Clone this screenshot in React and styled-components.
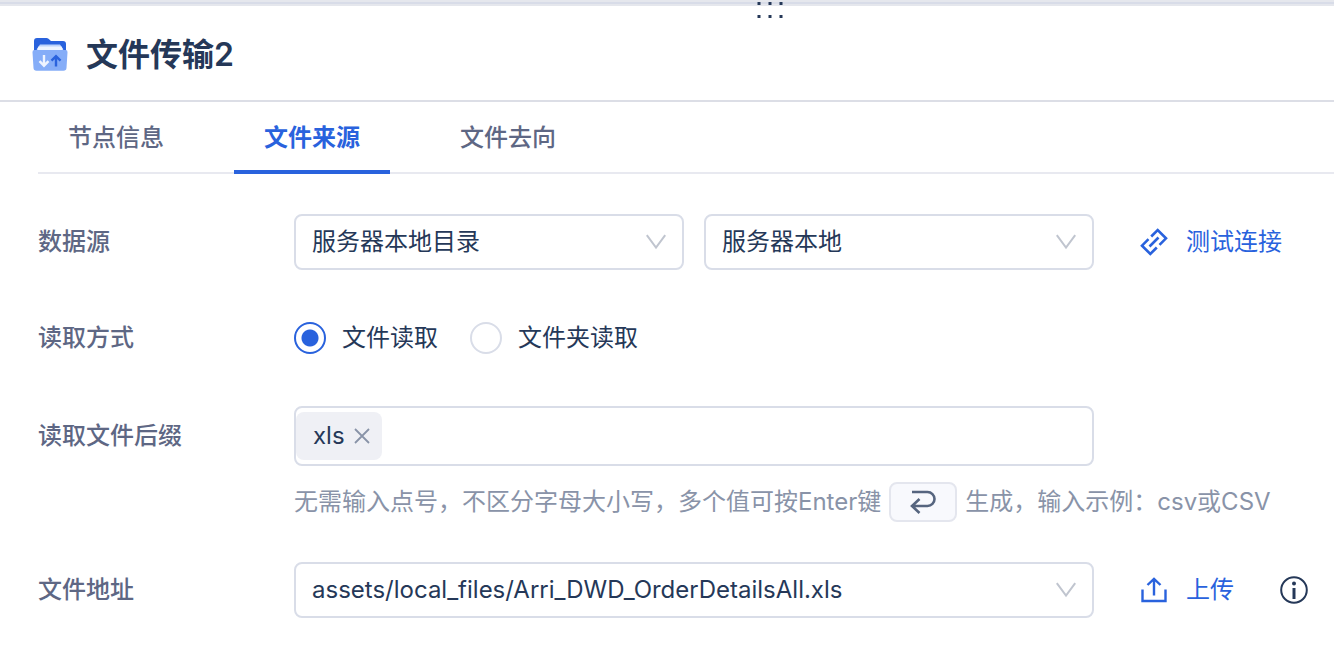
import React, { useState } from "react";
import styled, { createGlobalStyle } from "styled-components";

const GlobalStyle = createGlobalStyle`
  * {
    box-sizing: border-box;
  }

  body {
    margin: 0;
    background: #fff;
    color: #253858;
    font-family: Inter, "Noto Sans CJK SC", sans-serif;
    font-size: 24px;
    line-height: 32px;
  }

  button, input, select {
    font: inherit;
    color: inherit;
  }
`;

const Splitter = styled.div`
  position: relative;
  height: 6px;
  border-top: 2px solid #e5e7ed;
  border-bottom: 2px solid #e5e7ed;
  background: #d8dce8;
`;

const Grip = styled.svg`
  position: absolute;
  top: 0;
  left: 757px;
  fill: #253858;
`;

const Header = styled.header`
  display: flex;
  align-items: center;
  gap: 18px;
  height: 96px;
  padding: 4px 32px 0;
  border-bottom: 2px solid #dcdee6;
`;

const Title = styled.h1`
  margin: 0;
  font-size: 32px;
  line-height: 48px;
  font-weight: 600;
`;

const Tabs = styled.nav`
  display: flex;
  gap: 40px;
  height: 72px;
  margin-left: 38px;
  border-bottom: 2px solid #e8e9f0;
`;

const Tab = styled.button`
  height: 72px;
  padding: 4px 30px 0;
  border: none;
  border-bottom: 4px solid ${(props) => (props.$active ? "#2962dd" : "transparent")};
  background: none;
  color: ${(props) => (props.$active ? "#2962dd" : "#5e6784")};
  font-weight: ${(props) => (props.$active ? 700 : 500)};
  cursor: pointer;
`;

const Form = styled.form`
  display: grid;
  gap: 40px;
  padding: 40px 26px 40px 38px;
`;

const Row = styled.div`
  display: grid;
  grid-template-columns: 256px minmax(0, 1fr) 214px;
  align-items: center;
  min-height: 56px;
`;

const Label = styled.label`
  color: #5e6784;
  font-weight: 500;
`;

const Fields = styled.div`
  display: flex;
  gap: ${(props) => props.$gap || 20}px;
`;

const SelectBox = styled.div`
  position: relative;
  flex: 1;
  min-width: 0;

  svg {
    position: absolute;
    top: 20px;
    right: 18px;
    pointer-events: none;
  }
`;

const Select = styled.select`
  display: block;
  width: 100%;
  height: 56px;
  padding: 0 48px 0 16px;
  border: 2px solid #d9dde8;
  border-radius: 8px;
  background: #fff;
  appearance: none;
  outline: none;
`;

const RadioLabel = styled.label`
  display: flex;
  align-items: center;
  gap: 16px;
  cursor: pointer;
`;

const Radio = styled.input`
  width: 32px;
  height: 32px;
  margin: 0;
  border: 2px solid #d9dde8;
  border-radius: 50%;
  appearance: none;

  &:checked {
    border-color: #2962dd;
    background: radial-gradient(circle, #2962dd 8px, #fff 9px);
  }
`;

const TagBox = styled.div`
  display: flex;
  align-items: center;
  height: 60px;
  border: 2px solid #d9dde8;
  border-radius: 8px;
`;

const Tag = styled.span`
  display: flex;
  align-items: center;
  gap: 9px;
  height: 48px;
  padding: 0 12px 0 17px;
  border-radius: 8px;
  background: #eff0f5;
`;

const TagClose = styled.button`
  display: flex;
  padding: 0;
  border: none;
  background: none;
  cursor: pointer;
`;

const TagInput = styled.input`
  flex: 1;
  min-width: 0;
  height: 48px;
  padding: 0 12px;
  border: none;
  background: none;
  outline: none;
`;

const Hint = styled.p`
  grid-column: 2 / 4;
  display: flex;
  align-items: center;
  gap: 8px;
  margin: 16px 0 0;
  color: #8993a8;
  white-space: nowrap;
`;

const Key = styled.kbd`
  display: flex;
  align-items: center;
  justify-content: center;
  width: 68px;
  height: 40px;
  border: 2px solid #e4e6ee;
  border-radius: 8px;
  background: #f8f9fd;
`;

const Actions = styled.div`
  display: flex;
  align-items: center;
  justify-content: space-between;
  padding-left: 46px;
`;

const Action = styled.button`
  display: flex;
  align-items: center;
  gap: 18px;
  padding: 0;
  border: none;
  background: none;
  color: #2962dd;
  cursor: pointer;
`;

const IconButton = styled.button`
  display: flex;
  padding: 0;
  border: none;
  background: none;
  cursor: pointer;
`;

const FolderIcon = () => (
  <svg width="36" height="36" viewBox="0 0 36 36" aria-hidden="true">
    <path d="M2 4a3 3 0 0 1 3-3h9.500a3 3 0 0 1 2 .8L19 4h12a3 3 0 0 1 3 3v12H2z" fill="#2962dd" />
    <path d="M8 7.500h20l3.500 5H4.500z" fill="#bdd3fb" />
    <path d="M6.500 9.500h23l2.500 6H4z" fill="#eef4ff" />
    <path d="M2.500 13h31a2 2 0 0 1 2 2.200l-1 15.800a3 3 0 0 1-3 2.800h-27a3 3 0 0 1-3-2.800l-1-15.800a2 2 0 0 1 2-2.200z" fill="#85adf8" />
    <path d="M12 18v10.500M7.500 24.200l4.500 4.500 4.500-4.500" fill="none" stroke="#eef4ff" strokeWidth="2.400" />
    <path d="M24 29.500V19.500M19.500 23.700l4.500-4.500 4.500 4.500" fill="none" stroke="#2962dd" strokeWidth="2.400" />
  </svg>
);

const ChevronIcon = () => (
  <svg width="20" height="16" viewBox="0 0 20 16" fill="none" stroke="#c0c5cf" strokeWidth="2" aria-hidden="true">
    <path d="M.8 1.200L10 13.500l9.200-12.300" />
  </svg>
);

const LinkIcon = () => (
  <svg width="28" height="28" viewBox="0 0 28 28" fill="none" stroke="currentColor" strokeWidth="2.600" aria-hidden="true">
    <path d="M11.200 8.500L17.700 2 26 10.300l-6.500 6.500M8.500 11.200L2 17.700l8.300 8.300 6.500-6.500M9.500 18.500l9-9" />
  </svg>
);

const UploadIcon = () => (
  <svg width="28" height="28" viewBox="0 0 28 28" fill="none" stroke="currentColor" strokeWidth="2.400" aria-hidden="true">
    <path d="M2.500 13.500v11.500h23V13.500M14 19.500V3M7.500 9L14 2.800 20.500 9" />
  </svg>
);

const InfoIcon = () => (
  <svg width="28" height="28" viewBox="0 0 28 28" fill="none" stroke="#253858" strokeWidth="2" aria-hidden="true">
    <circle cx="14" cy="14" r="12.800" />
    <path d="M14 12v11" strokeWidth="3" />
    <circle cx="14" cy="7.500" r="2" fill="#253858" stroke="none" />
  </svg>
);

const EnterIcon = () => (
  <svg width="28" height="26" viewBox="0 0 28 26" fill="none" stroke="#56657f" strokeWidth="2.600" aria-hidden="true">
    <path d="M3 3h15.500a7 7 0 0 1 0 14H3M10.500 10L3 17l7.500 7" />
  </svg>
);

const CloseIcon = () => (
  <svg width="16" height="16" viewBox="0 0 16 16" stroke="#8993a8" strokeWidth="1.800" aria-hidden="true">
    <path d="M1 1l14 14M15 1L1 15" />
  </svg>
);

const SelectField = ({ id, label, value }) => (
  <SelectBox>
    <Select id={id} aria-label={label} defaultValue={value}>
      <option>{value}</option>
    </Select>
    <ChevronIcon />
  </SelectBox>
);

const tabs = ["节点信息", "文件来源", "文件去向"];
const readModes = ["文件读取", "文件夹读取"];

const App = () => {
  const [tab, setTab] = useState(tabs[1]);
  const [mode, setMode] = useState(readModes[0]);
  const [tags, setTags] = useState(["xls"]);

  return (
    <>
      <GlobalStyle />
      <Splitter>
        <Grip width="26" height="18" viewBox="0 0 26 18">
          {[0, 11, 22].map((x) => (
            <path key={x} d={`M${x + 0.5} 0h3v3h-3zM${x + 0.5} 13h3v3h-3z`} />
          ))}
        </Grip>
      </Splitter>
      <Header>
        <FolderIcon />
        <Title>文件传输2</Title>
      </Header>
      <Tabs>
        {tabs.map((name) => (
          <Tab key={name} type="button" $active={name === tab} onClick={() => setTab(name)}>
            {name}
          </Tab>
        ))}
      </Tabs>
      <Form>
        <Row>
          <Label htmlFor="source">数据源</Label>
          <Fields>
            <SelectField id="source" value="服务器本地目录" />
            <SelectField label="连接" value="服务器本地" />
          </Fields>
          <Actions>
            <Action type="button">
              <LinkIcon />
              测试连接
            </Action>
          </Actions>
        </Row>
        <Row role="radiogroup" aria-labelledby="mode">
          <Label as="span" id="mode">读取方式</Label>
          <Fields $gap={32}>
            {readModes.map((name) => (
              <RadioLabel key={name}>
                <Radio type="radio" name="mode" checked={name === mode} onChange={() => setMode(name)} />
                {name}
              </RadioLabel>
            ))}
          </Fields>
        </Row>
        <Row>
          <Label htmlFor="suffix">读取文件后缀</Label>
          <TagBox>
            {tags.map((tag) => (
              <Tag key={tag}>
                {tag}
                <TagClose
                  type="button"
                  aria-label={`删除 ${tag}`}
                  onClick={() => setTags(tags.filter((t) => t !== tag))}
                >
                  <CloseIcon />
                </TagClose>
              </Tag>
            ))}
            <TagInput id="suffix" type="text" />
          </TagBox>
          <Hint>
            无需输入点号，不区分字母大小写，多个值可按Enter键
            <Key aria-label="Enter">
              <EnterIcon />
            </Key>
            生成，输入示例：csv或CSV
          </Hint>
        </Row>
        <Row>
          <Label htmlFor="path">文件地址</Label>
          <SelectField id="path" value="assets/local_files/Arri_DWD_OrderDetailsAll.xls" />
          <Actions>
            <Action type="button">
              <UploadIcon />
              上传
            </Action>
            <IconButton type="button" aria-label="说明">
              <InfoIcon />
            </IconButton>
          </Actions>
        </Row>
      </Form>
    </>
  );
};

export default App;
